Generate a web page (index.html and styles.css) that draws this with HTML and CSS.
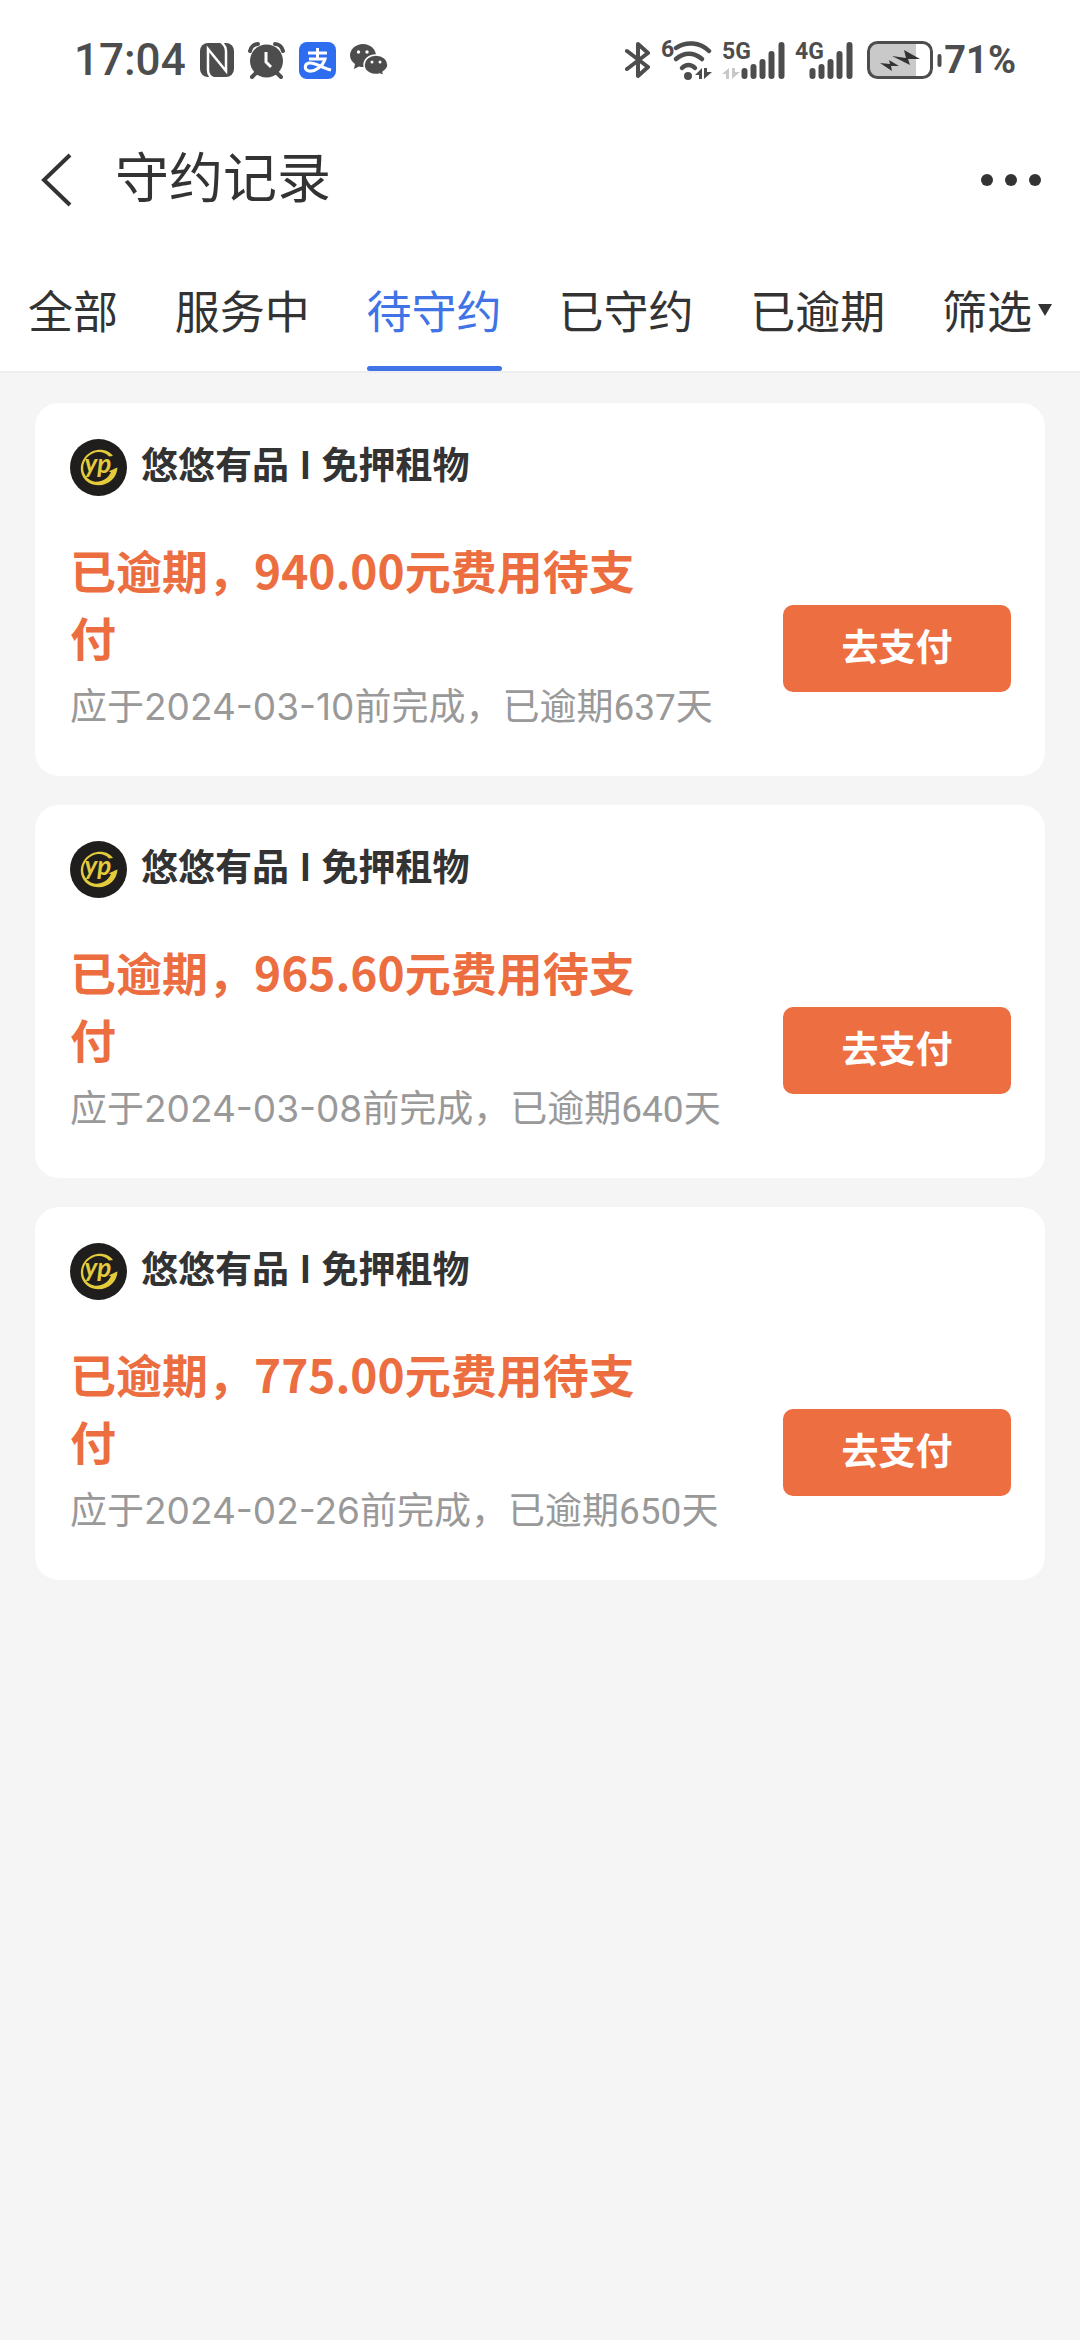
FILE: index.html
```html
<!DOCTYPE html>
<html lang="zh-CN">
<head>
  <meta charset="UTF-8">
  <meta name="viewport" content="width=device-width, initial-scale=1.0">
  <title>守约记录</title>
  <link rel="stylesheet" href="styles.css">
</head>
<body>

<div class="statusbar">
  <div class="status-left">
    <span class="time">17:04</span>
    <svg width="34" height="34" viewBox="0 0 34 34">
      <rect width="34" height="34" rx="8" fill="#4d4d4d"/>
      <path d="M13 35Q8 33 8 27V6L26 28V8Q26 3 21 -1" fill="none" stroke="#fff" stroke-width="2.500"/>
    </svg>
    <svg width="37" height="37" viewBox="0 0 37 37">
      <circle cx="18.500" cy="19" r="16.500" fill="#4d4d4d"/>
      <path d="M2 9C3 5 6 2 10 2M35 9C34 5 31 2 27 2M8 31L4 35M29 31L33 35" fill="none" stroke="#4d4d4d" stroke-width="4" stroke-linecap="round"/>
      <path d="M18 10V20L23 25" fill="none" stroke="#fff" stroke-width="3"/>
    </svg>
    <svg width="37" height="37" viewBox="0 0 37 37">
      <rect width="37" height="37" rx="8" fill="#2f6df0"/>
      <path d="M9 11H28M18.500 6V17M10 17H26C24 24 16 30 10 29C5 28 5 22 10 21C16 20 23 26 32 28" fill="none" stroke="#fff" stroke-width="3"/>
    </svg>
    <svg width="38" height="33" viewBox="0 0 38 33">
      <path d="M13 0C6 0 0 5 0 11.500C0 15 2 18 5 20L4 25L9 22.500C18 25 26 19 26 11.500C26 5 20 0 13 0Z" fill="#4d4d4d"/>
      <path d="M26 11C19 11 14 15.500 14 21C14 28 22 32 30 30L34 32L33 28C36 26 38 24 38 21C38 15.500 33 11 26 11Z" fill="#4d4d4d" stroke="#fff" stroke-width="1.500"/>
      <circle cx="8.500" cy="8" r="1.700" fill="#fff"/><circle cx="17" cy="8" r="1.700" fill="#fff"/>
      <circle cx="22" cy="18" r="1.500" fill="#fff"/><circle cx="30" cy="18" r="1.500" fill="#fff"/>
    </svg>
  </div>
  <div class="status-right">
    <svg width="26" height="40" viewBox="0 0 26 40">
      <path d="M2 11L23 27L13 36V4L23 13L2 29" fill="none" stroke="#4d4d4d" stroke-width="4" stroke-linejoin="round" stroke-linecap="round"/>
    </svg>
    <svg width="51" height="56" viewBox="0 -8 51 56">
      <text class="net" x="0" y="17">6</text>
      <g fill="none" stroke="#4d4d4d" stroke-width="4.500" stroke-linecap="round">
        <path d="M15 8C25 1 39 2 48 11"/>
        <path d="M15 19C23 12 33 12 41 19"/>
        <path d="M21 28C25 24 30 24 34 28"/>
      </g>
      <circle cx="27" cy="36" r="4" fill="#4d4d4d"/>
      <path d="M34 35L41 28V39H38V35ZM43 28H46V32H51L43 39Z" fill="#4d4d4d"/>
    </svg>
    <svg width="63" height="56" viewBox="0 -8 63 56">
      <text class="net" x="0" y="19">5G</text>
      <path d="M0 34L7 28V39H4V34ZM10 28H13V32H18L10 39Z" fill="#c8c8c8"/>
      <path d="M22.500 31V36M31.500 27V36M40.500 22V36M49.500 14V36M59.500 5V36" stroke="#4d4d4d" stroke-width="6" stroke-linecap="round"/>
    </svg>
    <svg width="58" height="56" viewBox="0 -8 58 56">
      <text class="net" x="0" y="19">4G</text>
      <path d="M17.500 31V36M26.500 27V36M35.500 22V36M44.500 14V36M54.500 5V36" stroke="#4d4d4d" stroke-width="6" stroke-linecap="round"/>
    </svg>
    <div class="battery">
      <svg width="75" height="38" viewBox="0 0 75 38">
        <rect x="2" y="2" width="47" height="34" rx="8" fill="#c9c9c9"/>
        <rect x="40" y="2" width="9" height="34" fill="#c9c9c9"/>
        <rect x="1.500" y="1.500" width="63" height="35" rx="9" fill="none" stroke="#4d4d4d" stroke-width="3"/>
        <path d="M13 22L23 23L22 19L32 25L24 25L25 30Z M25 15L39 17L37 9L53 18L41 18L43 24Z" fill="#333"/>
        <path d="M72.500 15V24" stroke="#4d4d4d" stroke-width="4" stroke-linecap="round"/>
      </svg>
      <span class="percent">71%</span>
    </div>
  </div>
</div>

<header>
  <button class="back" aria-label="返回">
    <svg width="34" height="54" viewBox="0 0 34 54"><path d="M31 2L5 27L31 52" fill="none" stroke="#333" stroke-width="4"/></svg>
  </button>
  <h1>守约记录</h1>
  <button class="more" aria-label="更多">
    <svg width="60" height="14" viewBox="0 0 60 14" fill="#333"><circle cx="6" cy="7" r="6"/><circle cx="30" cy="7" r="6"/><circle cx="54" cy="7" r="6"/></svg>
  </button>
</header>

<nav>
  <a href="#">全部</a>
  <a href="#">服务中</a>
  <a href="#" class="active">待守约</a>
  <a href="#">已守约</a>
  <a href="#">已逾期</a>
  <a href="#" class="filter">筛选<svg width="14" height="12" viewBox="0 0 14 12"><path d="M0 0H14L7 12Z" fill="#333"/></svg></a>
</nav>

<main>
  <section class="card">
    <div class="shop">
      <svg class="logo" viewBox="0 0 57 57">
        <circle cx="28.500" cy="28.500" r="28.500" fill="#1f1e1d"/>
        <path d="M43 17C37 8 22 9 15 18C7 28 11 42 23 45.500C36 49 47 40 47.500 28.500C45 29.500 41 31 38.500 33H41C37 42 27 45 20 41C12 36 11 26 17 18.500C23 11.500 34 11 39 17.500Z" fill="#e3cb3c"/>
        <text class="logo-text" x="28" y="34" text-anchor="middle">yp</text>
      </svg>
      <h2>悠悠有品 <span class="bar">l</span> 免押租物</h2>
    </div>
    <div class="card-body">
      <div class="info">
        <p class="amount">已逾期，940.00元费用待支付</p>
        <p class="date">应于<time>2024-03-10</time>前完成，已逾期637天</p>
      </div>
      <button class="btn-pay">去支付</button>
    </div>
  </section>

  <section class="card">
    <div class="shop">
      <svg class="logo" viewBox="0 0 57 57">
        <circle cx="28.500" cy="28.500" r="28.500" fill="#1f1e1d"/>
        <path d="M43 17C37 8 22 9 15 18C7 28 11 42 23 45.500C36 49 47 40 47.500 28.500C45 29.500 41 31 38.500 33H41C37 42 27 45 20 41C12 36 11 26 17 18.500C23 11.500 34 11 39 17.500Z" fill="#e3cb3c"/>
        <text class="logo-text" x="28" y="34" text-anchor="middle">yp</text>
      </svg>
      <h2>悠悠有品 <span class="bar">l</span> 免押租物</h2>
    </div>
    <div class="card-body">
      <div class="info">
        <p class="amount">已逾期，965.60元费用待支付</p>
        <p class="date">应于<time>2024-03-08</time>前完成，已逾期640天</p>
      </div>
      <button class="btn-pay">去支付</button>
    </div>
  </section>

  <section class="card">
    <div class="shop">
      <svg class="logo" viewBox="0 0 57 57">
        <circle cx="28.500" cy="28.500" r="28.500" fill="#1f1e1d"/>
        <path d="M43 17C37 8 22 9 15 18C7 28 11 42 23 45.500C36 49 47 40 47.500 28.500C45 29.500 41 31 38.500 33H41C37 42 27 45 20 41C12 36 11 26 17 18.500C23 11.500 34 11 39 17.500Z" fill="#e3cb3c"/>
        <text class="logo-text" x="28" y="34" text-anchor="middle">yp</text>
      </svg>
      <h2>悠悠有品 <span class="bar">l</span> 免押租物</h2>
    </div>
    <div class="card-body">
      <div class="info">
        <p class="amount">已逾期，775.00元费用待支付</p>
        <p class="date">应于<time>2024-02-26</time>前完成，已逾期650天</p>
      </div>
      <button class="btn-pay">去支付</button>
    </div>
  </section>
</main>

</body>
</html>
```

FILE: styles.css
```css
* {
  box-sizing: border-box;
}
body {
  margin: 0;
  min-height: 100vh;
  font-family: 'Noto Sans CJK SC', sans-serif;
  background: #f5f5f5;
  color: #333;
}
h1, h2, p {
  margin: 0;
}
svg {
  display: block;
  flex-shrink: 0;
}
button {
  font-family: inherit;
  border: none;
  padding: 0;
  background: none;
  cursor: pointer;
}
.statusbar {
  display: flex;
  justify-content: space-between;
  align-items: center;
  height: 120px;
  padding: 0 64px 0 74px;
  background: #fff;
  color: #4d4d4d;
  font-family: 'Roboto', sans-serif;
}
.status-left, .status-right, .battery {
  display: flex;
  align-items: center;
}
.status-left {
  gap: 14px;
}
.status-right {
  gap: 10px;
}
.battery {
  gap: 2px;
  padding-left: 4px;
}
.time {
  font-size: 44px;
  font-weight: 500;
}
.percent {
  font-size: 38px;
  font-weight: 700;
}
.net {
  font: 700 23px 'Roboto', sans-serif;
  fill: #4d4d4d;
}
header {
  display: flex;
  align-items: center;
  height: 120px;
  padding: 0 39px;
  background: #fff;
}
.back {
  margin-right: 42px;
}
header h1 {
  flex: 1;
  font-size: 54px;
  font-weight: 400;
  line-height: 80px;
  padding-bottom: 10px;
}
nav {
  display: flex;
  justify-content: space-between;
  align-items: flex-start;
  padding: 38px 28px 0;
  background: #fff;
  border-bottom: 2px solid #eee;
}
nav a {
  color: #333;
  font-size: 45px;
  line-height: 64px;
  text-decoration: none;
}
nav a.active {
  color: #4074e6;
}
nav a.active::after {
  content: '';
  display: block;
  height: 5px;
  margin-top: 24px;
  border-radius: 3px;
  background: #4074e6;
}
.filter {
  display: flex;
  align-items: center;
  gap: 6px;
}
main {
  display: flex;
  flex-direction: column;
  gap: 29px;
  padding: 30px 35px;
}
.card {
  padding: 36px 34px 15px 35px;
  border-radius: 24px;
  background: #fff;
}
.shop {
  display: flex;
  gap: 14px;
  margin-bottom: 40px;
}
.logo {
  width: 57px;
  height: 57px;
}
.logo-text {
  font: italic 700 26px 'Lato', sans-serif;
  fill: #e3cb3c;
}
.shop h2 {
  font-size: 37px;
  font-weight: 700;
  line-height: 48px;
}
.bar {
  padding: 0 3px;
  font-family: 'Roboto', sans-serif;
  line-height: 1;
}
.card-body {
  display: flex;
  justify-content: space-between;
  align-items: center;
}
.info {
  padding-bottom: 20px;
}
.amount {
  max-width: 600px;
  color: #ec6e40;
  font-size: 46px;
  font-weight: 700;
  line-height: 67px;
}
.date {
  margin-top: 4px;
  color: #999;
  font-family: 'Roboto', 'Noto Sans CJK SC', sans-serif;
  font-size: 37px;
  line-height: 67px;
}
.date time {
  font-family: 'Inter', sans-serif;
  line-height: 1;
}
.btn-pay {
  width: 228px;
  height: 87px;
  padding-bottom: 8px;
  border-radius: 10px;
  background: #ed6e40;
  color: #fff;
  font-size: 37px;
  font-weight: 700;
}
```
